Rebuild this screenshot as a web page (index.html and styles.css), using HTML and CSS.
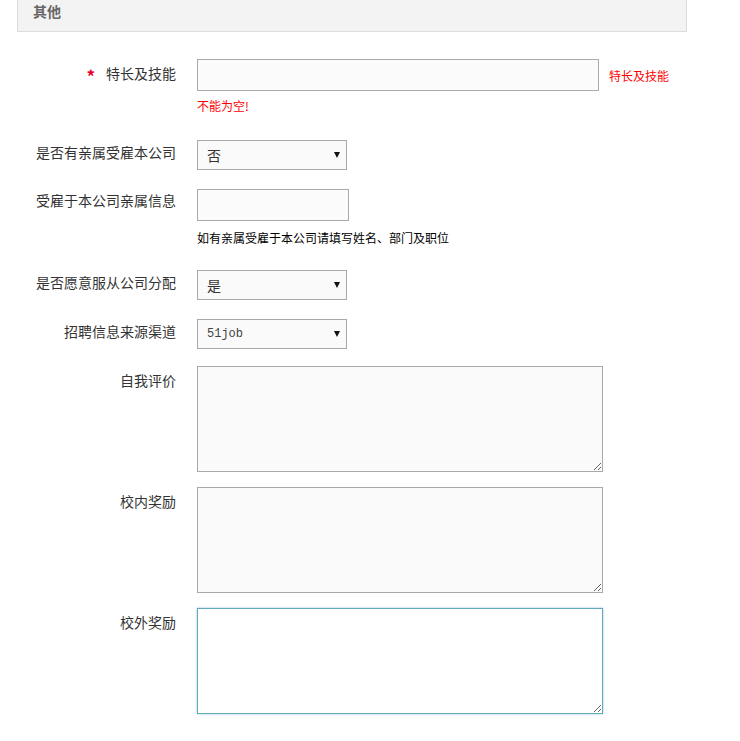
FILE: index.html
```html
<!DOCTYPE html>
<html lang="zh-CN">
<head>
    <meta charset="UTF-8">
    <meta name="viewport" content="width=device-width, initial-scale=1.0">
    <title>其他</title>
    <link rel="stylesheet" href="styles.css">
</head>
<body>
    <div class="panel">
        <div class="panel-head">其他</div>

        <form class="form">
            <div class="row">
                <label class="label label-text"><span class="req">*</span>特长及技能</label>
                <div class="field">
                    <div class="line">
                        <input type="text" class="text text-wide">
                        <span class="msg">特长及技能</span>
                    </div>
                    <div class="tip tip-err">不能为空!</div>
                </div>
            </div>

            <div class="row">
                <label class="label">是否有亲属受雇本公司</label>
                <div class="field">
                    <div class="select">
                        <select>
                            <option>否</option>
                            <option>是</option>
                        </select>
                    </div>
                </div>
            </div>

            <div class="row row-short">
                <label class="label label-info">受雇于本公司亲属信息</label>
                <div class="field">
                    <input type="text" class="text text-small">
                    <div class="tip tip-info">如有亲属受雇于本公司请填写姓名、部门及职位</div>
                </div>
            </div>

            <div class="row">
                <label class="label">是否愿意服从公司分配</label>
                <div class="field">
                    <div class="select">
                        <select>
                            <option>是</option>
                            <option>否</option>
                        </select>
                    </div>
                </div>
            </div>

            <div class="row row-tight">
                <label class="label">招聘信息来源渠道</label>
                <div class="field">
                    <div class="select">
                        <select class="mono">
                            <option>51job</option>
                            <option>智联招聘</option>
                        </select>
                    </div>
                </div>
            </div>

            <div class="row row-area">
                <label class="label label-area">自我评价</label>
                <div class="field">
                    <textarea class="area"></textarea>
                </div>
            </div>

            <div class="row row-area">
                <label class="label label-area">校内奖励</label>
                <div class="field">
                    <textarea class="area"></textarea>
                </div>
            </div>

            <div class="row row-area">
                <label class="label label-area">校外奖励</label>
                <div class="field">
                    <textarea class="area is-focus" autofocus></textarea>
                </div>
            </div>
        </form>
    </div>
</body>
</html>
```

FILE: styles.css
```css
body {
    margin: 0;
    padding: 0;
    background-color: #fff;
    color: #333;
    font-family: "Noto Sans CJK SC", "Liberation Sans", sans-serif;
    font-size: 14px;
}
.panel {
    width: 670px;
    margin: -9px 0 0 17px;
}
.panel-head {
    height: 39px;
    line-height: 39px;
    padding-left: 15px;
    background-color: #f3f3f3;
    border: 1px solid #ddd;
    color: #666;
    font-weight: bold;
    font-size: 14px;
}
.form {
    padding-top: 27px;
}
.row {
    display: grid;
    grid-template-columns: 159px 1fr;
    column-gap: 21px;
    margin-bottom: 19px;
}
.row-tight {
    margin-bottom: 17px;
}
.row-area {
    margin-bottom: 15px;
}
.label {
    text-align: right;
    line-height: 25px;
    white-space: nowrap;
}
.label-text {
    line-height: 28px;
}
.label-info {
    line-height: 23px;
}
.label-area {
    line-height: 28px;
}
.req {
    color: #e4002b;
    font-size: 17px;
    font-weight: bold;
    margin-right: 11px;
    vertical-align: -4px;
}
.line {
    display: flex;
    align-items: center;
}
.text {
    box-sizing: border-box;
    height: 32px;
    padding: 0 8px;
    border: 1px solid #aaa;
    background-color: #fbfbfb;
    font-family: inherit;
    font-size: 14px;
    color: #333;
    outline: none;
    display: block;
}
.text-wide {
    width: 402px;
}
.text-small {
    width: 152px;
}
.msg {
    margin-left: 10px;
    color: #f00;
    font-size: 12px;
}
.tip {
    font-size: 12px;
    line-height: 16px;
}
.tip-err {
    color: #f00;
    margin: 7px 0 7px;
}
.tip-info {
    color: #000;
    margin: 9px 0 5px;
}
.select {
    position: relative;
    width: 150px;
}
.select::after {
    content: "";
    position: absolute;
    right: 7px;
    top: 12px;
    border-left: 3px solid transparent;
    border-right: 3px solid transparent;
    border-top: 6px solid #111;
    pointer-events: none;
}
.select select {
    -webkit-appearance: none;
    appearance: none;
    box-sizing: border-box;
    width: 150px;
    height: 30px;
    padding: 0 20px 0 9px;
    border: 1px solid #aaa;
    border-radius: 0;
    background-color: #fafafa;
    font-family: inherit;
    font-size: 14px;
    color: #333;
    outline: none;
    display: block;
}
.select select.mono {
    font-family: "Liberation Mono", "DejaVu Sans Mono", monospace;
    font-size: 12px;
    color: #444;
}
.area {
    box-sizing: border-box;
    display: block;
    width: 406px;
    height: 106px;
    margin: 0;
    padding: 4px;
    border: 1px solid #aaa;
    background-color: #fafafa;
    font-family: inherit;
    font-size: 14px;
    color: #333;
    outline: none;
}
.area.is-focus,
.area:focus {
    border-color: #5fabb6;
    background-color: #fff;
    box-shadow: 0 0 2px rgba(82, 150, 200, 0.6);
}
```
